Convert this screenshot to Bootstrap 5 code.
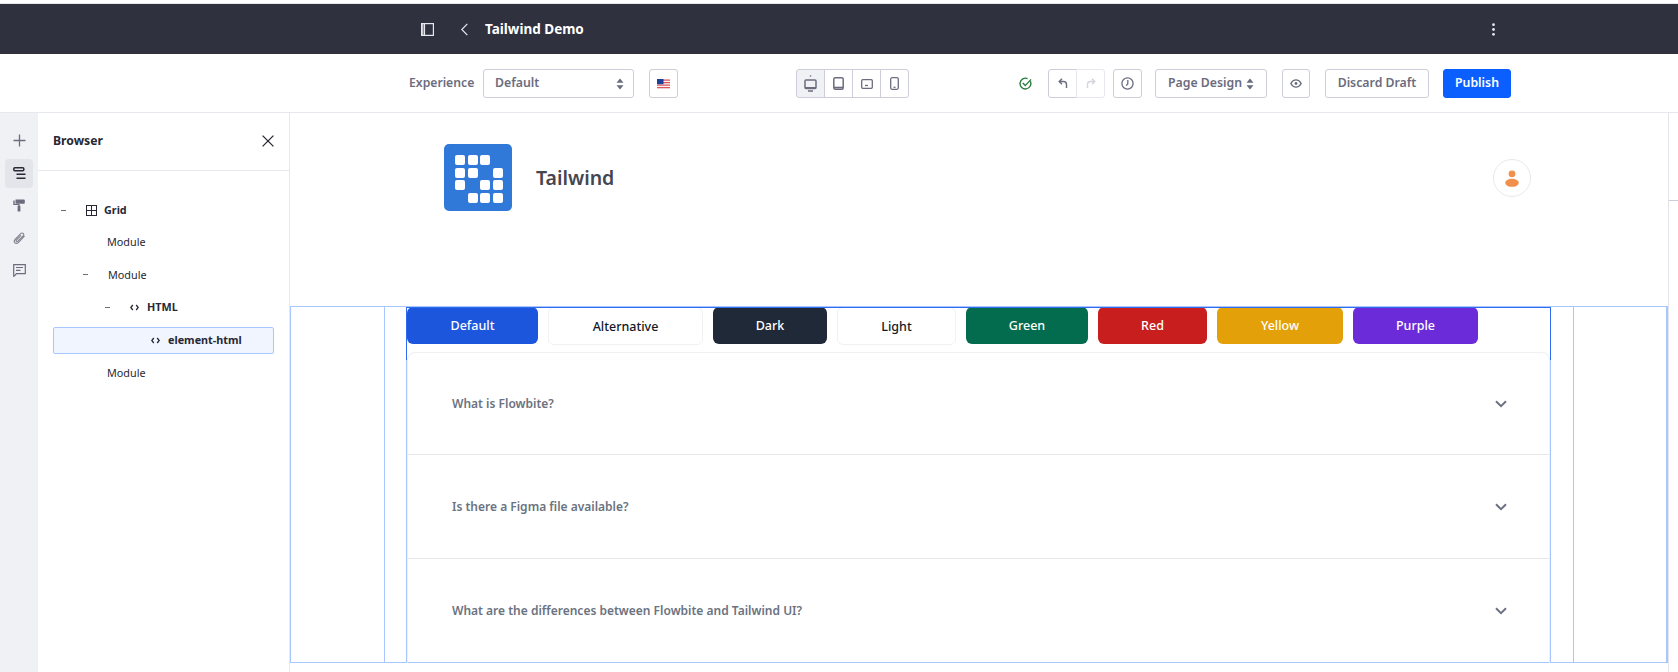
<!DOCTYPE html>
<html lang="en">

<head>
    <meta charset="UTF-8">
    <title>Tailwind Demo</title>
    <link href="https://cdn.jsdelivr.net/npm/bootstrap@5.3.0/dist/css/bootstrap.min.css" rel="stylesheet">
    <style>
        html, body { height: 672px; overflow: hidden; }
        body { font-family: "Noto Sans", "Liberation Sans", sans-serif; background: #fff; color: #272833; padding-top: 3px; }
        .top-line { height: 1px; background: #e7e7ed; }
        .top-bar { height: 50px; background: #2f313f; color: #fff; padding-left: 421px; }
        .top-title { font-size: 13.5px; font-weight: 700; margin-left: 17px; }
        .top-back { margin-left: 27px; }
        .top-more { margin-left: 908px; }

        .tool-bar { height: 59px; border-bottom: 1px solid #e7e7ed; padding: 1px 0 0 409px; }
        .tool-label { font-size: 12.2px; font-weight: 600; color: #6b6c7e; width: 74px; }
        .tool-box { height: 29px; border: 1px solid #cdced9; border-radius: 3px; background: #fff; color: #6b6c7e; font-size: 12.3px; font-weight: 600; padding: 0; }
        .w-select { width: 151px; padding: 0 9px 0 11px; }
        .w-flag { width: 29px; margin-left: 15px; }
        .dev-group { margin-left: 118px; }
        .dev-btn { width: 29px; border-radius: 0; margin-left: -1px; }
        .dev-btn:first-child { border-radius: 3px 0 0 3px; background: #f0f1f5; margin-left: 0; }
        .dev-btn:last-child { border-radius: 0 3px 3px 0; }
        .w-check { margin-left: 110px; margin-right: 16px; }
        .w-undo { width: 29px; border-radius: 3px 0 0 3px; }
        .w-redo { width: 29px; border-radius: 0 3px 3px 0; border-color: #e7e7ed; margin-left: -1px; }
        .w-hist { width: 29px; margin-left: 8px; }
        .w-design { width: 112px; margin-left: 13px; }
        .w-eye { width: 28px; margin-left: 15px; }
        .w-discard { width: 104px; margin-left: 15px; }
        .w-publish { width: 68px; margin-left: 14px; background: #0b5fff; border-color: #0b5fff; color: #fff; }

        .work-area { height: 559px; }
        .side-rail { width: 38px; background: #f0f1f5; padding-top: 13px; }
        .rail-btn { width: 28px; height: 29px; margin: 0 auto 3.5px; border-radius: 4px; }
        .rail-active { background: #e4e5eb; }
        .browser-panel { width: 252px; border-right: 1px solid #e7e7ed; }
        .browser-head { height: 58px; padding: 0 15px 1px 15px; border-bottom: 1px solid #e7e7ed; font-size: 12.2px; font-weight: 700; }
        .tree-list { margin: 23px 0 0; padding: 0 15px; font-size: 10.8px; }
        .tree-row { height: 32.4px; position: relative; color: #272833; }
        .tree-dash { width: 5px; height: 1px; background: #6b6c7e; }
        .dep-0 { padding-left: 8px; }
        .dep-1 { padding-left: 30px; }
        .dep-2 { padding-left: 52px; }
        .dep-3 { padding-left: 97px; }
        .tree-plain { padding-left: 54px; }
        .tree-selected { background: #f0f5ff; border: 1px solid #a9c7ff; border-radius: 2px; height: 27px; margin-bottom: 3px; margin-top: 3px; }
        .tree-bold { font-weight: 700; }
        .grid-mark { margin-left: 20px; margin-right: 7px; }
        .code-mark { margin-left: 20px; margin-right: 8px; }

        .canvas-pane { width: 1378px; }
        .page-head { height: 193px; padding: 31px 137px 0 154px; }
        .site-logo { width: 68px; height: 67px; background: #3079d8; border-radius: 5px; padding: 11px; gap: 2.5px; display: grid; grid-template-columns: repeat(4, 10px); grid-auto-rows: 10px; }
        .logo-dot { background: #fff; border-radius: 2px; }
        .logo-gap { background: transparent; }
        .site-name { font-size: 19.5px; font-weight: 600; color: #45464f; margin-left: 24px; }
        .site-user { width: 38px; height: 38px; border: 1px solid #e9e9ee; border-radius: 50%; margin-top: 15px; }

        .frame-wrap { height: 357px; border: 1px solid #a9c7ff; border-width: 1px 2px 1px 1px; }
        .frame-col { border-right: 1px solid #a9c7ff; height: 100%; }
        .frame-a { width: 94px; }
        .frame-b { width: 22px; }
        .frame-main { width: 1144px; position: relative; border-right: 1px solid #a9c7ff; height: 100%; }
        .frame-c { width: 23px; }
        .select-mark { position: absolute; left: -1px; right: -1px; top: 0; height: 53px; border: solid #2e6bf0; border-width: 1px 1px 0 1px; pointer-events: none; }

        .fb-btn { height: 37px; margin-right: 10px; border-radius: 6px; font-size: 12.5px; font-weight: 500; color: #fff; border: 0; padding: 2px 0 0; }
        .fb-row { height: 45px; }
        .fb-blue { width: 131px; background: #1c56dc; }
        .fb-alt { width: 155px; background: #fff; border: 1px solid #f0f1f3; color: #111827; height: 38px; }
        .fb-dark { width: 114px; background: #1f2937; }
        .fb-light { width: 119px; background: #fff; border: 1px solid #f0f1f3; color: #111827; height: 38px; }
        .fb-green { width: 122px; background: #046c4e; }
        .fb-red { width: 109px; background: #c81e1e; }
        .fb-yellow { width: 126px; background: #e3a008; }
        .fb-purple { width: 125px; background: #6c2bd9; }

        .faq-box { border: 1px solid #eff0f3; border-bottom: 0; border-radius: 8px 8px 0 0; }
        .faq-row { height: 104px; padding: 0 42px 0 44px; border-bottom: 1px solid #e5e7eb; color: #6b7280; font-size: 12px; font-weight: 600; }
        .faq-row:first-child { height: 102px; }
        .faq-row:last-child { border-bottom: 0; }

        .side-sliver { flex: 1; border-left: 1px solid #e3e3ea; }
        .sliver-top { height: 88px; border-bottom: 1px solid #cdced9; }
    </style>
</head>

<body>
    <div class="top-line"></div>

    <!-- Barra superior -->
    <div class="top-bar d-flex align-items-center">
        <svg width="13" height="13" viewBox="0 0 13 13" fill="none" stroke="#e7e7ed" stroke-width="1.2"><rect x="0.6" y="0.6" width="11.8" height="11.8"/><path d="M3.5 0.6v11.8M1.8 0.6v11.8"/></svg>
        <svg class="top-back" width="7" height="13" viewBox="0 0 7 13" fill="none" stroke="#e7e7ed" stroke-width="1.2"><path d="M6.3 0.8L0.8 6.5l5.5 5.7"/></svg>
        <span class="top-title">Tailwind Demo</span>
        <svg class="top-more" width="3" height="13" viewBox="0 0 3 13" fill="#e7e7ed"><circle cx="1.5" cy="1.7" r="1.4"/><circle cx="1.5" cy="6.5" r="1.4"/><circle cx="1.5" cy="11.3" r="1.4"/></svg>
    </div>

    <!-- Barra de herramientas -->
    <div class="tool-bar d-flex align-items-center">
        <span class="tool-label">Experience</span>
        <div class="tool-box w-select d-flex align-items-center justify-content-between">
            <span>Default</span>
            <svg width="8" height="12" viewBox="0 0 8 12" fill="#6b6c7e"><path d="M4 0.5L7.5 4.8H0.5zM4 11.5L0.5 7.2h7z"/></svg>
        </div>
        <button class="tool-box w-flag d-flex align-items-center justify-content-center">
            <svg width="13" height="10" viewBox="0 0 13 10"><rect width="13" height="10" fill="#f4f4f6"/><path d="M0 1.2h13M0 3.7h13M0 6.2h13M0 8.7h13" stroke="#e0535c" stroke-width="1.2"/><rect width="6.5" height="5.2" fill="#1d3f99"/></svg>
        </button>

        <div class="dev-group d-flex">
            <button class="tool-box dev-btn d-flex align-items-center justify-content-center">
                <svg width="13" height="18" viewBox="0 0 13 18" fill="none" stroke="#6b6c7e" stroke-width="1.5"><circle cx="6.5" cy="1" r="0.8" fill="#6b6c7e" stroke="none"/><rect x="1" y="5" width="11" height="8.5" rx="1"/><path d="M4 16h5"/><path d="M1 13h11" stroke-width="2"/></svg>
            </button>
            <button class="tool-box dev-btn d-flex align-items-center justify-content-center">
                <svg width="11" height="13" viewBox="0 0 11 13" fill="none" stroke="#6b6c7e" stroke-width="1.5"><rect x="0.8" y="0.8" width="9.4" height="11.4" rx="1.5"/><path d="M1 10.5h9" stroke-width="1.6"/></svg>
            </button>
            <button class="tool-box dev-btn d-flex align-items-center justify-content-center">
                <svg width="12" height="10" viewBox="0 0 12 10" fill="none" stroke="#6b6c7e" stroke-width="1.3"><rect x="0.7" y="0.7" width="10.6" height="8.6" rx="1"/><path d="M4 6.5h3"/></svg>
            </button>
            <button class="tool-box dev-btn d-flex align-items-center justify-content-center">
                <svg width="9" height="13" viewBox="0 0 9 13" fill="none" stroke="#6b6c7e" stroke-width="1.3"><rect x="0.7" y="0.7" width="7.6" height="11.6" rx="1.5"/><path d="M3.5 10.3h2"/></svg>
            </button>
        </div>

        <svg class="w-check" width="13" height="13" viewBox="0 0 13 13" fill="none" stroke="#287d3c" stroke-width="1.4"><path d="M11.3 4.2A5.4 5.4 0 1 1 8.6 1.6"/><path d="M3.8 6l2.5 2.6L12 2.4"/></svg>
        <button class="tool-box w-undo d-flex align-items-center justify-content-center">
            <svg width="10" height="11" viewBox="0 0 10 11" fill="none" stroke="#6b6c7e" stroke-width="1.4"><path d="M4 0.8L1.2 3.5 4 6.2M1.2 3.5h4.3a3 3 0 0 1 3 3v3.4"/></svg>
        </button>
        <button class="tool-box w-redo d-flex align-items-center justify-content-center">
            <svg width="10" height="11" viewBox="0 0 10 11" fill="none" stroke="#d3d4dc" stroke-width="1.4"><path d="M6 0.8l2.8 2.7L6 6.2M8.8 3.5H4.5a3 3 0 0 0-3 3v3.4"/></svg>
        </button>
        <button class="tool-box w-hist d-flex align-items-center justify-content-center">
            <svg width="13" height="13" viewBox="0 0 13 13" fill="none" stroke="#6b6c7e" stroke-width="1.3"><circle cx="6.5" cy="6.5" r="5.6"/><path d="M6.8 3v3.8L5.2 8.6"/></svg>
        </button>
        <div class="tool-box w-design d-flex align-items-center justify-content-center gap-1">
            <span>Page Design</span>
            <svg width="8" height="12" viewBox="0 0 8 12" fill="#6b6c7e"><path d="M4 0.5L7.5 4.8H0.5zM4 11.5L0.5 7.2h7z"/></svg>
        </div>
        <button class="tool-box w-eye d-flex align-items-center justify-content-center">
            <svg width="12" height="9" viewBox="0 0 12 9" fill="none" stroke="#6b6c7e" stroke-width="1.4"><path d="M0.8 4.5C2.2 2 4 0.9 6 0.9s3.8 1.1 5.2 3.6C9.8 7 8 8.1 6 8.1S2.2 7 0.8 4.5z"/><circle cx="6" cy="4.5" r="1.4" fill="#6b6c7e" stroke="none"/></svg>
        </button>
        <button class="tool-box w-discard">Discard Draft</button>
        <button class="tool-box w-publish">Publish</button>
    </div>

    <div class="work-area d-flex">
        <!-- Barra lateral -->
        <div class="side-rail">
            <div class="rail-btn d-flex align-items-center justify-content-center">
                <svg width="13" height="13" viewBox="0 0 13 13" stroke="#6b6c7e" stroke-width="1.3"><path d="M6.5 0.5v12M0.5 6.5h12"/></svg>
            </div>
            <div class="rail-btn rail-active d-flex align-items-center justify-content-center">
                <svg width="13" height="13" viewBox="0 0 13 13" fill="none" stroke="#272833" stroke-width="1.5"><rect x="0.8" y="0.8" width="10" height="3" rx="1"/><path d="M3.5 7.2h9M3.5 11.2h9"/></svg>
            </div>
            <div class="rail-btn d-flex align-items-center justify-content-center">
                <svg width="12" height="13" viewBox="0 0 12 13" fill="#6b6c7e"><path d="M2.5 0.5h8.3a1 1 0 0 1 1 1v2.2a1 1 0 0 1-1 1H2.5z"/><path d="M0.3 1.6h1.4v3.3h4.9v1.9H5.4V5.9H0.3z"/><rect x="4.6" y="6.6" width="2.8" height="6" rx="0.9"/></svg>
            </div>
            <div class="rail-btn d-flex align-items-center justify-content-center">
                <svg width="13" height="13" viewBox="0 0 13 13" fill="none" stroke="#83848f" stroke-width="1.1"><path d="M11.6 3.8L5.3 10.6c-1 1-2.5 1.1-3.4.2s-.8-2.3.2-3.3l5.6-5.9c.7-.8 1.8-.9 2.5-.2s.6 1.7-.1 2.5L4.6 9.3c-.4.4-1 .5-1.3.1s-.3-.9.1-1.3l4.6-4.8"/></svg>
            </div>
            <div class="rail-btn d-flex align-items-center justify-content-center">
                <svg width="13" height="13" viewBox="0 0 13 13" fill="none" stroke="#6b6c7e" stroke-width="1.2"><path d="M0.7 0.7h11.6v9H3.4L1.6 11.8l-.9.4z"/><path d="M3 3.5h7M3 6.3h4.5"/></svg>
            </div>
        </div>

        <!-- Panel Browser -->
        <div class="browser-panel">
            <div class="browser-head d-flex align-items-center justify-content-between">
                <span>Browser</span>
                <svg width="12" height="12" viewBox="0 0 12 12" stroke="#272833" stroke-width="1.3"><path d="M0.6 0.6l10.8 10.8M11.4 0.6L0.6 11.4"/></svg>
            </div>
            <ul class="tree-list list-unstyled">
                <li class="tree-row d-flex align-items-center dep-0 tree-bold">
                    <span class="tree-dash"></span>
                    <svg class="grid-mark" width="11" height="11" viewBox="0 0 11 11" fill="none" stroke="#272833" stroke-width="1"><rect x="0.5" y="0.5" width="10" height="10"/><path d="M5.5 0.5v10M0.5 5.5h10"/></svg>
                    <span>Grid</span>
                </li>
                <li class="tree-row d-flex align-items-center tree-plain">Module</li>
                <li class="tree-row d-flex align-items-center dep-1">
                    <span class="tree-dash"></span>
                    <span class="ms-3 ps-1">Module</span>
                </li>
                <li class="tree-row d-flex align-items-center dep-2 tree-bold">
                    <span class="tree-dash"></span>
                    <svg class="code-mark" width="9" height="7" viewBox="0 0 9 7" fill="none" stroke="#272833" stroke-width="1.3"><path d="M2.8 1L0.8 3.5l2 2.5M6.2 1l2 2.5-2 2.5"/></svg>
                    <span>HTML</span>
                </li>
                <li class="tree-selected d-flex align-items-center dep-3 tree-bold">
                    <svg class="me-2" width="9" height="7" viewBox="0 0 9 7" fill="none" stroke="#272833" stroke-width="1.3"><path d="M2.8 1L0.8 3.5l2 2.5M6.2 1l2 2.5-2 2.5"/></svg>
                    <span>element-html</span>
                </li>
                <li class="tree-row d-flex align-items-center tree-plain">Module</li>
            </ul>
        </div>

        <!-- Lienzo -->
        <div class="canvas-pane">
            <div class="page-head d-flex justify-content-between align-items-start">
                <div class="d-flex align-items-center">
                    <div class="site-logo">
                        <span class="logo-dot"></span><span class="logo-dot"></span><span class="logo-dot"></span><span class="logo-gap"></span>
                        <span class="logo-dot"></span><span class="logo-dot"></span><span class="logo-gap"></span><span class="logo-dot"></span>
                        <span class="logo-dot"></span><span class="logo-gap"></span><span class="logo-dot"></span><span class="logo-dot"></span>
                        <span class="logo-gap"></span><span class="logo-dot"></span><span class="logo-dot"></span><span class="logo-dot"></span>
                    </div>
                    <div class="site-name">Tailwind</div>
                </div>
                <div class="site-user d-flex align-items-center justify-content-center">
                    <svg width="14" height="17" viewBox="0 0 14 17" fill="#f0904a"><circle cx="7" cy="3.8" r="3.4"/><ellipse cx="7" cy="12.8" rx="6.8" ry="4"/></svg>
                </div>
            </div>

            <div class="frame-wrap d-flex">
                <div class="frame-col frame-a"></div>
                <div class="frame-col frame-b"></div>
                <div class="frame-main">
                    <div class="select-mark"></div>
                    <div class="fb-row d-flex">
                        <button class="fb-btn fb-blue">Default</button>
                        <button class="fb-btn fb-alt">Alternative</button>
                        <button class="fb-btn fb-dark">Dark</button>
                        <button class="fb-btn fb-light">Light</button>
                        <button class="fb-btn fb-green">Green</button>
                        <button class="fb-btn fb-red">Red</button>
                        <button class="fb-btn fb-yellow">Yellow</button>
                        <button class="fb-btn fb-purple">Purple</button>
                    </div>
                    <div class="faq-box">
                        <div class="faq-row d-flex align-items-center justify-content-between">
                            <span>What is Flowbite?</span>
                            <svg width="12" height="8" viewBox="0 0 12 8" fill="none" stroke="#6b7280" stroke-width="2"><path d="M1 1.2l5 5 5-5"/></svg>
                        </div>
                        <div class="faq-row d-flex align-items-center justify-content-between">
                            <span>Is there a Figma file available?</span>
                            <svg width="12" height="8" viewBox="0 0 12 8" fill="none" stroke="#6b7280" stroke-width="2"><path d="M1 1.2l5 5 5-5"/></svg>
                        </div>
                        <div class="faq-row d-flex align-items-center justify-content-between">
                            <span>What are the differences between Flowbite and Tailwind UI?</span>
                            <svg width="12" height="8" viewBox="0 0 12 8" fill="none" stroke="#6b7280" stroke-width="2"><path d="M1 1.2l5 5 5-5"/></svg>
                        </div>
                    </div>
                </div>
                <div class="frame-col frame-c"></div>
            </div>
        </div>

        <div class="side-sliver">
            <div class="sliver-top"></div>
        </div>
    </div>
</body>

</html>
